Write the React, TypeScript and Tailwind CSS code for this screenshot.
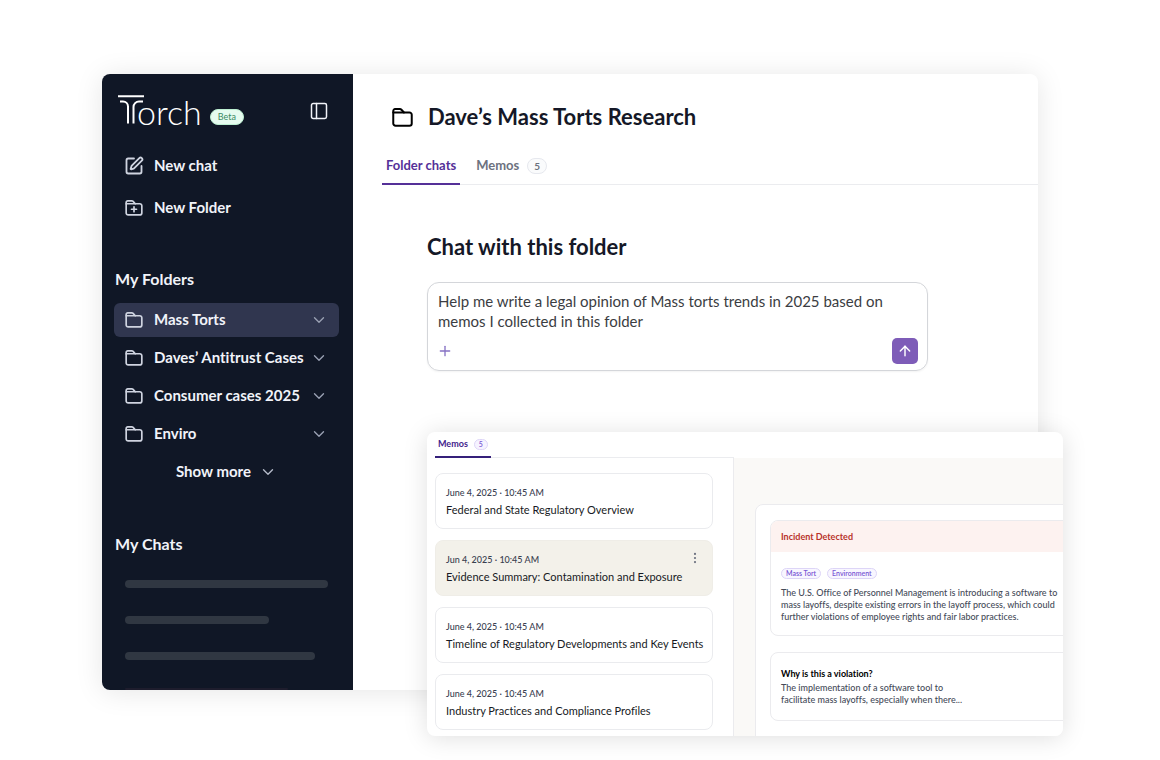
import React from "react";
import { ArrowUp, ChevronDown, EllipsisVertical, PanelLeft, Plus, SquarePen } from "lucide-react";

function FolderIcon({ className, plus = false }: { className: string; plus?: boolean }) {
  return (
    <svg
      viewBox="0 0 20 18"
      className={className}
      fill="none"
      stroke="currentColor"
      strokeWidth="1.9"
      strokeLinecap="round"
      strokeLinejoin="round"
      aria-hidden="true"
    >
      <path d="M1.2 4.2V2.7A1.7 1.7 0 0 1 2.9 1h4.6c.6 0 1.1.2 1.5.6l2.4 2.6h5.2a2.2 2.2 0 0 1 2.2 2.2v8.2a2.2 2.2 0 0 1-2.2 2.2H3.4a2.2 2.2 0 0 1-2.2-2.2V4.2Z" />
      <path d="M1.2 4.2h10.2" />
      {plus && <path d="M10 7.6v5.6M7.2 10.4h5.6" />}
    </svg>
  );
}

function Logo() {
  return (
    <div className="flex items-end text-white" aria-label="Torch">
      <svg viewBox="0 0 27 30" className="h-[30px] w-[27px]" fill="none" stroke="currentColor" strokeWidth="2" aria-hidden="true">
        <path d="M0 1.2h26" />
        <path d="M2 6.500h3a5 5 0 0 1 5 5V28.500" />
        <path d="M25 6.500h-4a5.500 5.500 0 0 0-5.500 5.500V28.500" />
      </svg>
      <span className="-ml-2 h-[30px] text-[34px] leading-[34px] font-light">orch</span>
    </div>
  );
}

const folders = ["Mass Torts", "Daves’ Antitrust Cases", "Consumer cases 2025", "Enviro"];

function Sidebar() {
  return (
    <aside className="flex w-[251px] shrink-0 flex-col overflow-hidden rounded-l-lg bg-[#101726] pr-3.5 pl-3 text-[#f1f3f9]">
      <div className="mt-4 flex h-10 items-center pl-1">
        <Logo />
        <span className="mt-3.5 ml-2 rounded-full border border-[#bdf0d2] bg-[#e6fbef] px-[7px] text-[9px] leading-[14px] text-[#3c8a63]">
          Beta
        </span>
        <button type="button" aria-label="Toggle sidebar" className="mt-0.5 mr-2.5 ml-auto">
          <PanelLeft className="size-5" strokeWidth={1.8} />
        </button>
      </div>

      <nav className="mt-[15px] flex flex-col text-[15px] font-bold">
        <button type="button" className="flex h-[42px] items-center gap-2.5 pl-2.5">
          <SquarePen className="size-5 text-[#cfd4e0]" strokeWidth={2.2} />
          <span className="pb-0.5">New chat</span>
        </button>
        <button type="button" className="flex h-[42px] items-center gap-2.5 pl-2.5">
          <FolderIcon plus className="mx-px h-4 w-[18px] text-[#cfd4e0]" />
          <span className="pb-0.5">New Folder</span>
        </button>
      </nav>

      <h2 className="mt-[38px] pl-px text-base leading-6 font-bold">My Folders</h2>
      <ul className="mt-3 flex flex-col gap-1 text-[15px] font-bold">
        {folders.map((name, i) => (
          <li key={name}>
            <button
              type="button"
              className={
                i === 0
                  ? "flex h-[34px] w-full items-center gap-[11px] rounded-md bg-[#30364f] px-[11px] whitespace-nowrap"
                  : "flex h-[34px] w-full items-center gap-[11px] rounded-md px-[11px] whitespace-nowrap"
              }
            >
              <FolderIcon className="h-4 w-[18px] shrink-0 text-[#cfd4e0]" />
              <span className="flex-1 pb-0.5 text-left">{name}</span>
              <ChevronDown className="-ml-3 size-[18px] shrink-0 text-[#9aa1b3]" strokeWidth={1.8} />
            </button>
          </li>
        ))}
      </ul>
      <button type="button" className="mt-1 flex h-[34px] items-center justify-center gap-2 text-[15px] font-bold">
        <span className="pb-0.5">Show more</span>
        <ChevronDown className="size-[18px] text-[#b4bac8]" strokeWidth={1.8} />
      </button>

      <h2 className="mt-[43px] pl-px text-base leading-6 font-bold">My Chats</h2>
      <div className="mt-6 flex flex-col gap-7 pl-[11px]">
        <div className="h-2 w-[203px] rounded-full bg-[#303742]" />
        <div className="h-2 w-[144px] rounded-full bg-[#303742]" />
        <div className="h-2 w-[190px] rounded-full bg-[#303742]" />
        <div className="h-0.5 w-[163px] rounded-full bg-[#1e1d2d]" />
      </div>
    </aside>
  );
}

function FolderPage() {
  return (
    <main className="min-w-0 flex-1 pl-[29px]">
      <div className="mt-[27px] flex h-8 items-center pl-2.5">
        <FolderIcon className="h-[19px] w-[21px] text-black" />
        <h1 className="ml-[15px] pb-0.5 text-[22px] font-bold text-[#151827]">Dave’s Mass Torts Research</h1>
      </div>
      <div className="mt-4 flex border-b border-[#ebecef] text-[13px]" role="tablist">
        <button
          type="button"
          role="tab"
          aria-selected="true"
          className="-mb-px h-9 border-b-2 border-[#553098] px-1 font-bold text-[#553098]"
        >
          Folder chats
        </button>
        <button type="button" role="tab" aria-selected="false" className="ml-3 flex h-[34px] items-center gap-2 px-1 font-bold text-[#6d7280]">
          Memos
          <span className="rounded-full border border-[#e6e8ee] bg-[#fafbfc] px-1.5 text-[10px] leading-[14px]">5</span>
        </button>
      </div>
      <section className="mt-[46px] mr-[110px] ml-[45px]">
        <h2 className="text-[22px] leading-8 font-bold text-[#151827]">Chat with this folder</h2>
        <form className="mt-[19px] rounded-xl border border-[#d4d6da] px-2.5 pt-2 pb-1.5 shadow-xs">
          <textarea
            aria-label="Message"
            rows={2}
            className="block w-full resize-none overflow-hidden text-[15px] leading-5 text-[#3b3d42] outline-none"
            defaultValue="Help me write a legal opinion of Mass torts trends in 2025 based on memos I collected in this folder"
          />
          <div className="mt-[7px] flex items-center justify-between">
            <button type="button" aria-label="Add attachment" className="-ml-px text-[#8672c4]">
              <Plus className="size-4" strokeWidth={2} />
            </button>
            <button
              type="button"
              aria-label="Send"
              className="-mr-px flex size-[26px] items-center justify-center rounded-[5px] bg-[#7e5cb8] text-white"
            >
              <ArrowUp className="size-4" strokeWidth={2.2} />
            </button>
          </div>
        </form>
      </section>
    </main>
  );
}

const memos = [
  { date: "June 4, 2025 · 10:45 AM", title: "Federal and State Regulatory Overview", active: false },
  { date: "Jun 4, 2025 · 10:45 AM", title: "Evidence Summary: Contamination and Exposure", active: true },
  { date: "June 4, 2025 · 10:45 AM", title: "Timeline of Regulatory Developments and Key Events", active: false },
  { date: "June 4, 2025 · 10:45 AM", title: "Industry Practices and Compliance Profiles", active: false },
];

function MemoPanel() {
  return (
    <section className="absolute top-[358px] -right-[25px] -bottom-[46px] left-[325px] flex overflow-hidden rounded-lg bg-white shadow-[0_2px_24px_rgba(0,0,0,0.13)]">
      <div className="w-[307px] shrink-0">
        <div className="ml-2 flex border-b border-[#ebecef]" role="tablist">
          <button
            type="button"
            role="tab"
            aria-selected="true"
            className="-mb-px flex h-[26px] items-center gap-1.5 border-b-2 border-[#35207a] px-[3px] text-[9px] font-bold text-[#43248c]"
          >
            Memos
            <span className="rounded-full border border-[#ddd5f7] bg-[#f6f3ff] px-1 text-[7px] leading-[9px] font-semibold text-[#7957d4]">5</span>
          </button>
        </div>
        <div className="h-full border-r border-[#ebebee]">
          <ul className="flex flex-col gap-[11px] pt-[15px] pr-5 pl-2">
            {memos.map((memo) => (
              <li
                key={memo.title}
                className={
                  memo.active
                    ? "flex h-14 items-start justify-between rounded-lg border border-[#efede7] bg-[#f3f1ea] px-2.5 pt-3 whitespace-nowrap"
                    : "flex h-14 items-start justify-between rounded-lg border border-[#eaebee] bg-white px-2.5 pt-3 whitespace-nowrap"
                }
              >
                <div>
                  <p className="text-[9px] leading-[14px] font-medium text-[#39404f]">{memo.date}</p>
                  <h3 className="text-[11px] leading-5 text-[#171a24]">{memo.title}</h3>
                </div>
                {memo.active && (
                  <button type="button" aria-label="Memo options" className="-mt-0.5 text-[#6d7280]">
                    <EllipsisVertical className="size-3.5" strokeWidth={1.8} />
                  </button>
                )}
              </li>
            ))}
          </ul>
        </div>
      </div>

      <div className="mt-[26px] min-w-0 flex-1 bg-[#faf9f7] pt-[46px] pl-[21px]">
        <div className="-mr-10 flex h-full min-h-[260px] flex-col gap-4 rounded-tl-lg border border-[#ebebee] bg-white pt-[15px] pl-3.5 whitespace-nowrap">
          <article className="overflow-hidden rounded-lg border border-[#ebebee]">
            <h3 className="bg-[#fdf2f0] pl-2.5 text-[9px] leading-[31px] font-bold text-[#b8322b]">Incident Detected</h3>
            <div className="px-2.5 pt-4 pb-3">
              <div className="flex gap-1.5 text-[7px] leading-[9px] font-semibold text-[#7957d4]">
                <span className="rounded-full border border-[#ddd5f7] bg-[#f8f6ff] px-1">Mass Tort</span>
                <span className="rounded-full border border-[#ddd5f7] bg-[#f8f6ff] px-1">Environment</span>
              </div>
              <p className="mt-2 text-[9px] leading-3 font-medium text-[#454b59]">
                The U.S. Office of Personnel Management is introducing a software to
                <br />
                mass layoffs, despite existing errors in the layoff process, which could
                <br />
                further violations of employee rights and fair labor practices.
              </p>
            </div>
          </article>
          <article className="rounded-lg border border-[#ebebee] px-2.5 pt-[15px] pb-3.5">
            <h3 className="text-[9px] leading-3 font-bold text-black">Why is this a violation?</h3>
            <p className="mt-0.5 text-[9px] leading-3 font-medium text-[#454b59]">
              The implementation of a software tool to
              <br />
              facilitate mass layoffs, especially when there...
            </p>
          </article>
        </div>
      </div>
    </section>
  );
}

export default function App() {
  return (
    <div className="min-h-screen bg-white pt-[74px] pr-[122px] pb-[70px] pl-[102px] font-['Lato','Noto_Sans',sans-serif] [font-variant-ligatures:none]">
      <div className="relative flex rounded-lg bg-white shadow-[0_2px_28px_rgba(0,0,0,0.10)]">
        <Sidebar />
        <FolderPage />
        <MemoPanel />
      </div>
    </div>
  );
}
